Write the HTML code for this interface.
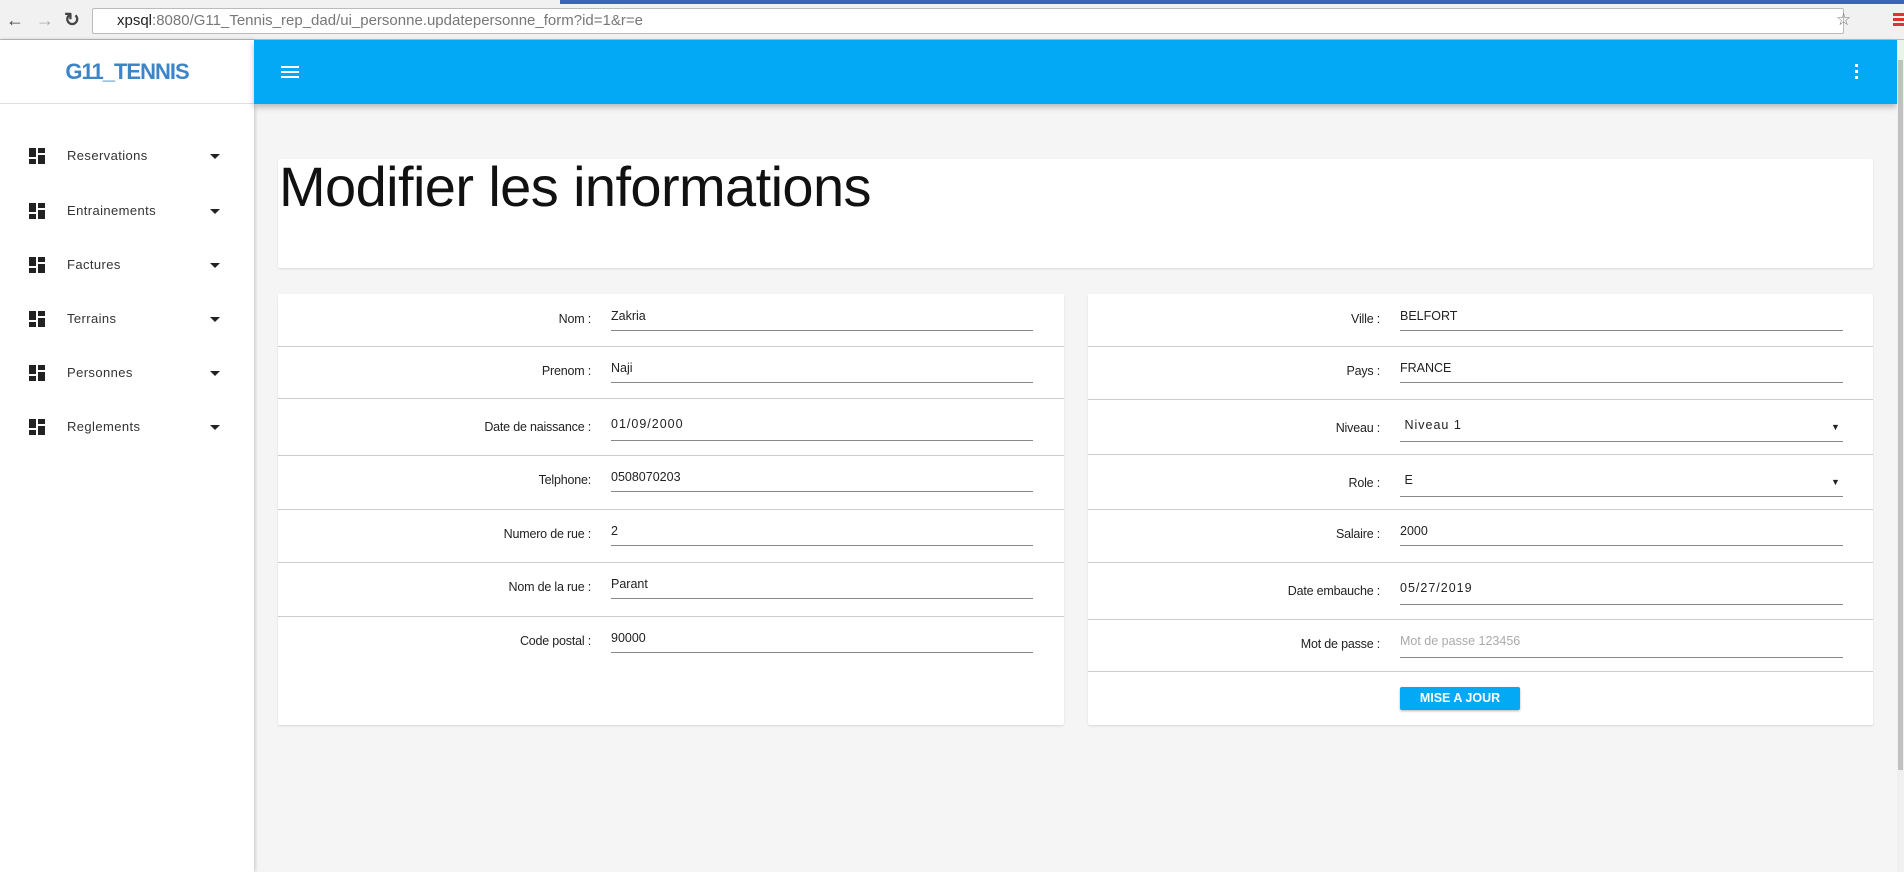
<!DOCTYPE html>
<html><head><meta charset="utf-8"><style>
*{margin:0;padding:0;box-sizing:border-box}
body{width:1904px;height:872px;overflow:hidden;background:#f5f5f5;font-family:"Liberation Sans",sans-serif;position:relative}
.abs{position:absolute}
.chrome{left:0;top:0;width:1904px;height:40px;background:#f1f1f1;border-bottom:1px solid #bdbdbd}
.url{left:92px;top:8px;width:1752px;height:26px;background:#fff;border:1px solid #bbb;border-radius:2px;font-size:15px;color:#777;line-height:24px;padding-left:24px}
.url b{font-weight:normal;color:#222}
.side{left:0;top:40px;width:254px;height:832px;background:#fff;box-shadow:1px 0 4px rgba(0,0,0,.2)}
.logo{left:0;top:40px;width:254px;height:64px;border-bottom:1px solid #e0e0e0;text-align:center;line-height:64px;color:#3d85c6;font-weight:bold;font-size:22px;letter-spacing:-1px}
.nav{left:29px;width:200px;height:20px;font-size:13px;color:#333;letter-spacing:.4px}
.nav i{position:absolute;left:0;top:2px;width:16px;height:16px}
.nav span{position:absolute;left:38px;top:2px}
.nav em{position:absolute;left:181px;top:8px;border-left:5px solid transparent;border-right:5px solid transparent;border-top:5px solid #222}
.hdr{left:254px;top:40px;width:1643px;height:64px;background:#03a9f4;box-shadow:0 3px 6px rgba(0,0,0,.25)}
.card{background:#fff;box-shadow:0 1px 2px rgba(0,0,0,.12);border-radius:2px}
.row{position:absolute;left:0;width:100%;border-top:1px solid #ccc}
.lbl{position:absolute;font-size:12.5px;color:#222;text-align:right;width:300px;letter-spacing:-.2px}
.val{position:absolute;font-size:12.5px;color:#222}
.ul{position:absolute;height:1px;background:#888}
.scroll{left:1897px;top:40px;width:7px;height:832px;background:#f0f0f0}
</style></head><body>
<div class="abs chrome"></div>
<div class="abs" style="left:560px;top:0;width:1344px;height:4px;background:#3b63b8"></div>
<div class="abs" style="left:6px;top:10px;font-size:18px;color:#444">&#8592;</div>
<div class="abs" style="left:36px;top:10px;font-size:18px;color:#aaa">&#8594;</div>
<div class="abs" style="left:64px;top:9px;font-size:19px;color:#444;font-weight:bold">&#8635;</div>
<div class="abs url"><b>xpsql</b>:8080/G11_Tennis_rep_dad/ui_personne.updatepersonne_form?id=1&amp;r=e</div>
<div class="abs" style="left:1836px;top:10px;font-size:17px;color:#777">&#9734;</div>
<div class="abs" style="left:1893px;top:13px;width:11px;height:3px;background:#d33;box-shadow:0 5px 0 #d33,0 10px 0 #d33"></div>

<div class="abs side"></div>
<div class="abs logo">G11_TENNIS</div>
<div class="abs hdr"></div>
<div class="abs" style="left:281px;top:66px;width:18px;height:2px;background:#fff;box-shadow:0 5px 0 #fff,0 10px 0 #fff"></div>
<div class="abs" style="left:1855px;top:64px;width:3px;height:3px;background:#fff;box-shadow:0 6px 0 #fff,0 12px 0 #fff"></div>
<div class="abs scroll"></div>
<div class="abs" style="left:1898px;top:60px;width:5px;height:710px;background:#c1c1c1"></div>

<div id="nav"></div>

<div class="abs card" style="left:278px;top:159px;width:1595px;height:109px"></div>
<div class="abs" style="left:279px;top:154px;font-size:56px;letter-spacing:-0.6px;color:#111">Modifier les informations</div>

<div class="abs card" style="left:278px;top:294px;width:786px;height:431px" id="lc"></div>
<div class="abs card" style="left:1088px;top:294px;width:785px;height:431px" id="rc"></div>

<div class="abs" style="left:1400px;top:687px;width:120px;height:23px;background:#03a9f4;color:#fff;font-size:12.5px;font-weight:bold;text-align:center;line-height:23px;box-shadow:0 1px 2px rgba(0,0,0,.3);border-radius:2px">MISE A JOUR</div>

<script>
var items=["Reservations","Entrainements","Factures","Terrains","Personnes","Reglements"],ys=[146,201,255,309,363,417],h="";
var ic='<i><svg width="16" height="16"><rect x="0" y="0" width="7" height="9" fill="#222"/><rect x="9" y="0" width="7" height="5" fill="#222"/><rect x="0" y="11" width="7" height="5" fill="#222"/><rect x="9" y="7" width="7" height="9" fill="#222"/></svg></i>';
items.forEach(function(t,i){h+='<div class="abs nav" style="top:'+ys[i]+'px">'+ic+'<span>'+t+'</span><em></em></div>';});
document.getElementById('nav').innerHTML=h;
function card(id,rows,lx,vx,vw){var c=document.getElementById(id),s="";
rows.forEach(function(r,i){var top=r[0],date=r[3];
if(i>0)s+='<div class="row" style="top:'+top+'px"></div>';
var ty=date?top+19:top+15, uy=date?top+42:top+36;
if(r[4]){ty=top+15;uy=top+38;}
s+='<div class="lbl" style="left:'+(lx-300)+'px;top:'+(ty+3)+'px">'+r[1]+'</div>';
if(r[2]!==null){s+='<div class="val" style="left:'+vx+'px;top:'+ty+'px;'+(r[4]?'color:#aaa;':'')+(date&&!r[4]?'letter-spacing:1px;':'')+'">'+r[2]+'</div>';
s+='<div class="ul" style="left:'+vx+'px;width:'+vw+'px;top:'+uy+'px"></div>';
if(r[5])s+='<div class="val" style="left:'+(vx+vw-12)+'px;top:'+(ty+4)+'px;font-size:9px">&#9660;</div>';}
});c.innerHTML=s;}
card('lc',[[0,'Nom :','Zakria'],[52,'Prenom :','Naji'],[104,'Date de naissance :','01/09/2000',1],[161,'Telphone:','0508070203'],[215,'Numero de rue :','2'],[268,'Nom de la rue :','Parant'],[322,'Code postal :','90000']],313,333,422);
card('rc',[[0,'Ville :','BELFORT'],[52,'Pays :','FRANCE'],[105,'Niveau :','&nbsp;Niveau 1',1,0,1],[160,'Role :','&nbsp;E',1,0,1],[215,'Salaire :','2000'],[268,'Date embauche :','05/27/2019',1],[325,'Mot de passe :','Mot de passe 123456',1,1],[377,'',null]],292,312,443);
</script>
</body></html>
